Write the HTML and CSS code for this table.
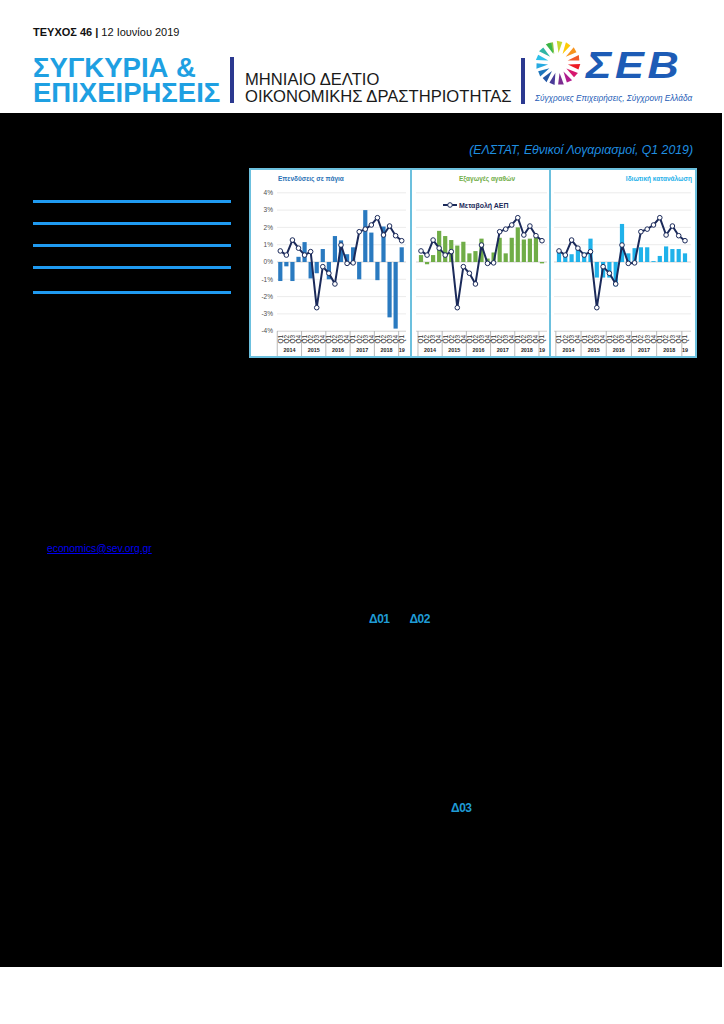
FILE: index.html
```html
<!DOCTYPE html>
<html lang="el">
<head>
<meta charset="utf-8">
<title>Συγκυρία &amp; Επιχειρήσεις – Τεύχος 46</title>
<link rel="stylesheet" href="styles.css">
</head>
<body>
<header class="top">
  <p class="issue"><b>ΤΕΥΧΟΣ 46 |</b> 12 Ιουνίου 2019</p>
  <div class="masthead">
    <h1 class="title"><span class="title-line">ΣΥΓΚΥΡΙΑ &amp;</span><span class="title-line">ΕΠΙΧΕΙΡΗΣΕΙΣ</span></h1>
    <span class="vbar vbar-1"></span>
    <p class="subtitle">ΜΗΝΙΑΙΟ ΔΕΛΤΙΟ<br>ΟΙΚΟΝΟΜΙΚΗΣ ΔΡΑΣΤΗΡΙΟΤΗΤΑΣ</p>
    <span class="vbar vbar-2"></span>
    <div class="logo">
      <div class="logo-main">
        <svg class="logo-mark" viewBox="0 0 46 46" aria-hidden="true">
          <defs><polygon id="wedge" points="23,13 20.6,0.8 26.2,1.8"/></defs>
          <use href="#wedge" transform="rotate(-22 23 23)" fill="#8cc63f"/>
          <use href="#wedge" transform="rotate(3 23 23)" fill="#c4d82e"/>
          <use href="#wedge" transform="rotate(27 23 23)" fill="#ffcb05"/>
          <use href="#wedge" transform="rotate(51 23 23)" fill="#f7941d"/>
          <use href="#wedge" transform="rotate(75 23 23)" fill="#f15a29"/>
          <use href="#wedge" transform="rotate(99 23 23)" fill="#ed1c24"/>
          <use href="#wedge" transform="rotate(123 23 23)" fill="#d6186f"/>
          <use href="#wedge" transform="rotate(147 23 23)" fill="#b01c8e"/>
          <use href="#wedge" transform="rotate(171 23 23)" fill="#7b2c90"/>
          <use href="#wedge" transform="rotate(195 23 23)" fill="#4a3b98"/>
          <use href="#wedge" transform="rotate(217 23 23)" fill="#2255a4"/>
          <use href="#wedge" transform="rotate(239 23 23)" fill="#1c75bc"/>
          <use href="#wedge" transform="rotate(261 23 23)" fill="#27aae1"/>
          <use href="#wedge" transform="rotate(284 23 23)" fill="#2dc0ea"/>
          <use href="#wedge" transform="rotate(308 23 23)" fill="#30b5a5"/>
          <use href="#wedge" transform="rotate(333 23 23)" fill="#39b54a"/>
        </svg>
        <span class="logo-word">ΣΕΒ</span>
      </div>
      <p class="logo-tag">Σύγχρονες Επιχειρήσεις, Σύγχρονη Ελλάδα</p>
    </div>
  </div>
</header>

<main class="dark">
  <p class="source">(ΕΛΣΤΑΤ, Εθνικοί Λογαριασμοί, Q1 2019)</p>
  <div class="row">
    <div class="rules">
      <span class="rule rule-1"></span>
      <span class="rule rule-2"></span>
      <span class="rule rule-3"></span>
      <span class="rule rule-4"></span>
      <span class="rule rule-5"></span>
    </div>
    <div class="chart">
      <div class="panel panel-1">
        <svg viewBox="251 170 159 186" class="panel-svg">
          <g id="plot-inv"></g>
          <text class="ptitle t-inv" x="278" y="180.5">Επενδύσεις σε πάγια</text>
          <g class="ytick">
            <text x="273" y="195">4%</text>
            <text x="273" y="212.3">3%</text>
            <text x="273" y="229.6">2%</text>
            <text x="273" y="246.9">1%</text>
            <text x="273" y="264.2">0%</text>
            <text x="273" y="281.5">-1%</text>
            <text x="273" y="298.8">-2%</text>
            <text x="273" y="316.1">-3%</text>
            <text x="273" y="333.4">-4%</text>
          </g>
        </svg>
      </div>
      <div class="panel panel-2">
        <svg viewBox="412 170 137 186" class="panel-svg">
          <g id="plot-exp"></g>
          <text class="ptitle t-exp" x="487" y="180.5">Εξαγωγές αγαθών</text>
          <g class="legend">
            <line x1="443" y1="205" x2="457" y2="205" class="legend-line"/>
            <circle cx="450" cy="205" r="2.3" class="dot"/>
            <text class="legend-text" x="459" y="207.5">Μεταβολή ΑΕΠ</text>
          </g>
        </svg>
      </div>
      <div class="panel panel-3">
        <svg viewBox="551 170 144 186" class="panel-svg">
          <g id="plot-con"></g>
          <text class="ptitle t-con" x="692" y="180.5">Ιδιωτική κατανάλωση</text>
        </svg>
      </div>
    </div>
  </div>
  <p class="contact"><a href="mailto:economics@sev.org.gr">economics@sev.org.gr</a></p>
  <p class="refs refs-1"><span>Δ01</span><span>Δ02</span></p>
  <p class="refs refs-2"><span>Δ03</span></p>
</main>
<script src="script.js"></script>
</body>
</html>
```

FILE: styles.css
```css
* { box-sizing: border-box; }
html, body { margin: 0; padding: 0; background: #fff; }
body {
  width: 724px;
  height: 1024px;
  overflow: hidden;
  font-family: "Liberation Sans", Arial, sans-serif;
}

/* ---------- header ---------- */
.top { height: 113px; }
.issue {
  margin: 0;
  padding: 26px 0 0 33px;
  font-size: 11px;
  line-height: 13px;
  color: #111;
}
.issue b { font-weight: 700; }

.masthead {
  display: flex;
  align-items: flex-start;
  margin-top: 1px;
}
.title {
  margin: 15px 0 0 33px;
  width: 197px;
  font-size: 27.5px;
  line-height: 25px;
  font-weight: 700;
  color: #1ea0e2;
  white-space: nowrap;
}
.title-line { display: block; height: 25px; }
.vbar {
  display: block;
  flex: none;
  width: 4px;
  height: 46px;
  background: #2b3990;
}
.vbar-1 { margin-top: 17px; }
.vbar-2 { margin-top: 18px; }
.subtitle {
  margin: 31px 0 0 11px;
  width: 276px;
  font-size: 16.6px;
  line-height: 17px;
  color: #1a1a1a;
  white-space: nowrap;
}
.logo { margin-left: 10px; }
.logo-main { display: flex; align-items: flex-start; }
.logo-mark { display: block; flex: none; width: 46px; height: 46px; overflow: visible; }
.logo-word {
  display: block;
  margin: 7px 0 0 5px;
  font-weight: 700;
  font-style: italic;
  font-size: 37px;
  line-height: 37px;
  letter-spacing: 3px;
  color: #1d5cb6;
  transform: scaleX(1.17);
  transform-origin: left center;
}
.logo-tag {
  margin: 8px 0 0 0;
  font-size: 8.2px;
  line-height: 10px;
  font-style: italic;
  color: #1d5cb6;
  white-space: nowrap;
}

/* ---------- dark body ---------- */
.dark {
  width: 722px;
  height: 854px;
  background: #000;
  padding-top: 30px;
}
.source {
  margin: 0;
  padding-right: 29px;
  text-align: right;
  font-size: 12.3px;
  line-height: 14px;
  font-style: italic;
  color: #1f8fe0;
}
.row {
  display: flex;
  align-items: flex-start;
  margin-top: 11px;
  padding-left: 33px;
}
.rules { width: 198px; display: flex; flex-direction: column; }
.rule { display: block; height: 3px; background: #1f9af0; }
.rule-1 { margin-top: 32px; }
.rule-2 { margin-top: 19px; }
.rule-3 { margin-top: 19.3px; }
.rule-4 { margin-top: 19px; }
.rule-5 { margin-top: 21.7px; }

.chart {
  display: flex;
  margin-left: 18px;
  width: 448px;
  height: 190px;
  border: 2px solid #6cc0de;
  background: #fff;
}
.panel { height: 186px; }
.panel-1 { width: 159px; }
.panel-2 { width: 139px; border-left: 2px solid #6cc0de; }
.panel-3 { width: 146px; border-left: 2px solid #6cc0de; }
.panel-svg { display: block; width: 100%; height: 100%; }

.ptitle { font-family: "Liberation Sans", sans-serif; font-size: 6.5px; font-weight: 700; }
.t-inv { fill: #2a72b5; }
.t-exp { fill: #70ad47; text-anchor: middle; }
.t-con { fill: #1fb1ea; text-anchor: end; }
.ytick text {
  font-family: "Liberation Sans", sans-serif;
  font-size: 6.5px;
  fill: #4d4d4d;
  text-anchor: end;
}
.grid { stroke: #dedede; stroke-width: 0.6; }
.axis { stroke: #bfbfbf; stroke-width: 0.7; }
.sep { stroke: #8c8c8c; stroke-width: 0.6; }
.qlab { font-family: "Liberation Sans", sans-serif; font-size: 6.4px; fill: #333; }
.ylab { font-family: "Liberation Sans", sans-serif; font-size: 5.4px; font-weight: 700; fill: #262626; }
.gdp { fill: none; stroke: #1b2a5a; stroke-width: 2; stroke-linejoin: round; }
.dot { fill: #fff; stroke: #1b2a5a; stroke-width: 1; }
.legend-line { stroke: #1b2a5a; stroke-width: 2; }
.legend-text { font-family: "Liberation Sans", sans-serif; font-size: 7px; font-weight: 700; fill: #1b2a5a; }

.contact {
  margin: 184.5px 0 0 47px;
  font-size: 10.3px;
  line-height: 12px;
}
.contact a { color: #0000f0; text-decoration: underline; }

.refs {
  margin: 0;
  display: flex;
  font-size: 12px;
  line-height: 14px;
  font-weight: 700;
  letter-spacing: -0.5px;
  color: #1f9bd5;
}
.refs-1 { margin-top: 57px; padding-left: 369px; gap: 20px; }
.refs-2 { margin-top: 175.3px; padding-left: 451px; }
```

FILE: script.js
```js
(function () {
  var NS = 'http://www.w3.org/2000/svg';
  var gdp = [0.64, 0.4, 1.27, 0.8, 0.4, 0.6, -2.64, -0.27, -0.65, -1.27, 0.98, -0.08, -0.05, 1.75, 1.9, 2.14, 2.56, 1.56, 2.08, 1.52, 1.23];
  var panels = [
    { id: 'plot-inv', x0: 280.3, dx: 6.07, g0: 277, g1: 406, color: '#2a7ac0',
      bars: [-1.1, -0.25, -1.1, 0.3, 1.15, -0.95, -0.65, 0.75, -1.0, 1.5, 1.25, 0.45, 0.85, -1.0, 3.0, 1.7, -1.05, 2.05, -3.2, -3.85, 0.85] },
    { id: 'plot-exp', x0: 421, dx: 6.05, g0: 416, g1: 547, color: '#70ad47',
      bars: [0.4, -0.13, 0.4, 1.8, 1.5, 1.27, 0.95, 1.17, 0.5, 0.63, 1.35, 0.2, 0.55, 1.4, 0.5, 1.4, 2.0, 1.3, 1.35, 1.45, -0.08] },
    { id: 'plot-con', x0: 559, dx: 6.3, g0: 554, g1: 691, color: '#20b2ea',
      bars: [0.6, 0.37, 0.45, 0.8, 0.55, 1.35, -0.9, -0.9, -0.9, -1.4, 2.2, 0.5, 0.8, 0.85, 0.85, 0.05, 0.35, 0.9, 0.75, 0.75, 0.5] }
  ];
  var years = ['2014', '2015', '2016', '2017', '2018', '19'];

  function y(v) { return +(262 - 17.3 * v).toFixed(2); }
  function el(name, attrs, text) {
    var e = document.createElementNS(NS, name);
    for (var k in attrs) e.setAttribute(k, attrs[k]);
    if (text != null) e.textContent = text;
    return e;
  }

  panels.forEach(function (p) {
    var g = document.getElementById(p.id);
    if (!g) return;
    var i, v, x, k;
    for (v = -4; v <= 4; v++) {
      g.appendChild(el('line', { 'class': (v === -4 || v === 0) ? 'axis' : 'grid', x1: p.g0, x2: p.g1, y1: y(v), y2: y(v) }));
    }
    for (i = 0; i < 21; i++) {
      x = p.x0 + p.dx * i;
      v = p.bars[i];
      var h = Math.max(Math.abs(17.3 * v), 0.8);
      var top = v >= 0 ? 262 - h : 262;
      g.appendChild(el('rect', { x: (x - 2.1).toFixed(2), y: top.toFixed(2), width: 4.2, height: h.toFixed(2), fill: p.color }));
    }
    for (k = 0; k <= 5; k++) {
      x = (p.x0 + p.dx * (4 * k - 0.5)).toFixed(2);
      g.appendChild(el('line', { 'class': 'sep', x1: x, x2: x, y1: 331.2, y2: 357 }));
    }
    for (i = 0; i < 21; i++) {
      x = p.x0 + p.dx * i;
      g.appendChild(el('text', { 'class': 'qlab', transform: 'translate(' + (x + 2.3).toFixed(2) + ' 343.5) rotate(-90)' }, 'Q' + (i % 4 + 1)));
    }
    for (k = 0; k < 6; k++) {
      x = k < 5 ? p.x0 + p.dx * (4 * k + 1.5) : p.x0 + p.dx * 20;
      g.appendChild(el('text', { 'class': 'ylab', x: x.toFixed(2), y: 352, 'text-anchor': 'middle' }, years[k]));
    }
    var pts = gdp.map(function (val, j) { return (p.x0 + p.dx * j).toFixed(2) + ',' + y(val); }).join(' ');
    g.appendChild(el('polyline', { 'class': 'gdp', points: pts }));
    gdp.forEach(function (val, j) {
      g.appendChild(el('circle', { 'class': 'dot', cx: (p.x0 + p.dx * j).toFixed(2), cy: y(val), r: 2.3 }));
    });
  });
})();
```
